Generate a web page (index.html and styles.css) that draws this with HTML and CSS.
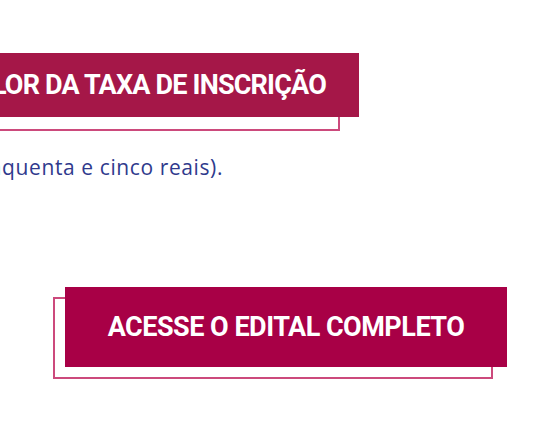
FILE: index.html
```html
<!DOCTYPE html>
<html lang="pt-BR">
<head>
    <meta charset="UTF-8">
    <meta name="viewport" content="width=device-width, initial-scale=1.0">
    <title>Taxa de inscrição</title>
    <link rel="stylesheet" href="styles.css">
</head>
<body>
    <div class="section-title">
        <h2>VALOR DA TAXA DE INSCRIÇÃO</h2>
    </div>

    <div class="fee-line">
        <p>R$ 55,00 (cinquenta e cinco reais).</p>
    </div>

    <div class="edital">
        <a class="edital-btn" href="#">ACESSE O EDITAL COMPLETO</a>
    </div>
</body>
</html>
```

FILE: styles.css
```css
body {
    margin: 0;
    padding-bottom: 60px;
    background: #fff;
    font-family: Roboto, "DejaVu Sans", sans-serif;
}
.section-title {
    position: relative;
    width: 359px;
    height: 64px;
    margin-top: 53px;
    display: flex;
    align-items: center;
    justify-content: flex-end;
    padding-right: 33px;
    box-sizing: border-box;
    background: #a51748;
}
.section-title::before {
    content: "";
    position: absolute;
    left: -19px;
    top: 14px;
    width: 100%;
    height: 100%;
    border: 2px solid #cc4a7c;
    box-sizing: border-box;
    z-index: -1;
}
.section-title h2 {
    margin: 0;
    color: #fff;
    font-size: 27px;
    font-weight: bold;
    letter-spacing: -0.8px;
    white-space: nowrap;
}
.fee-line {
    width: 223px;
    display: flex;
    justify-content: flex-end;
    margin-top: 36px;
}
.fee-line p {
    margin: 0;
    white-space: nowrap;
    color: #2f3a8d;
    font-family: "Open Sans", sans-serif;
    font-size: 21px;
    letter-spacing: 0.6px;
    line-height: 28px;
}
.edital {
    margin-top: 106px;
    padding-left: 65px;
}
.edital-btn {
    position: relative;
    display: flex;
    align-items: center;
    justify-content: center;
    width: 442px;
    height: 80px;
    background: #a80046;
    color: #fff;
    text-decoration: none;
    font-size: 27px;
    font-weight: bold;
    letter-spacing: -0.5px;
}
.edital-btn::before {
    content: "";
    position: absolute;
    left: -12px;
    top: 10px;
    width: 440px;
    height: 82px;
    border: 2px solid #cc4a7c;
    box-sizing: border-box;
    z-index: -1;
}
```
